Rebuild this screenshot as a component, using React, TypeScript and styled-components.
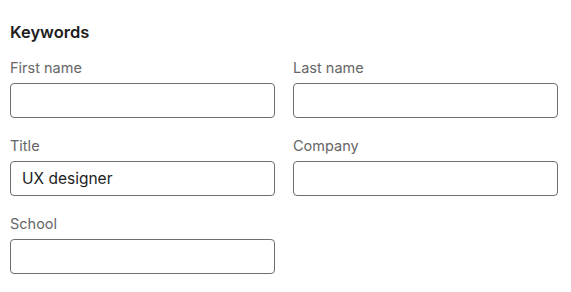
import React, { useState } from "react";
import styled, { createGlobalStyle } from "styled-components";

const GlobalStyle = createGlobalStyle`
  body {
    margin: 0;
    background: #ffffff;
    font-family: Inter, "Noto Sans", "Liberation Sans", sans-serif;
  }
`;

const Panel = styled.section`
  width: 571px;
  height: 292px;
  box-sizing: border-box;
  padding: 20px 14px 0 10px;
  background: #ffffff;
`;

const Heading = styled.h3`
  margin: 0 0 14px;
  font-size: 16.5px;
  line-height: 24px;
  font-weight: 600;
  color: #1d1d1d;
`;

const FieldGrid = styled.div`
  display: grid;
  grid-template-columns: 265px 265px;
  column-gap: 18px;
  row-gap: 18px;
`;

const Field = styled.label`
  display: flex;
  flex-direction: column;
  gap: 5px;
`;

const LabelText = styled.span`
  font-size: 14.5px;
  line-height: 20px;
  color: #666666;
`;

const TextInput = styled.input`
  box-sizing: border-box;
  width: 100%;
  height: 35px;
  padding: 0 11px;
  border: 1px solid #6f6f6f;
  border-radius: 4px;
  font-family: inherit;
  font-size: 15.5px;
  color: #1d1d1d;
  background: #ffffff;
  outline: none;
`;

const fields = [
  { key: "first", label: "First name", value: "" },
  { key: "last", label: "Last name", value: "" },
  { key: "title", label: "Title", value: "UX designer" },
  { key: "company", label: "Company", value: "" },
  { key: "school", label: "School", value: "" },
];

const App: React.FC = () => {
  const [values, setValues] = useState<Record<string, string>>(
    Object.fromEntries(fields.map((f) => [f.key, f.value]))
  );

  return (
    <>
      <GlobalStyle />
      <Panel>
        <Heading>Keywords</Heading>
        <FieldGrid>
          {fields.map((f) => (
            <Field key={f.key}>
              <LabelText>{f.label}</LabelText>
              <TextInput
                value={values[f.key]}
                onChange={(e) =>
                  setValues({ ...values, [f.key]: e.target.value })
                }
              />
            </Field>
          ))}
        </FieldGrid>
      </Panel>
    </>
  );
};

export default App;
